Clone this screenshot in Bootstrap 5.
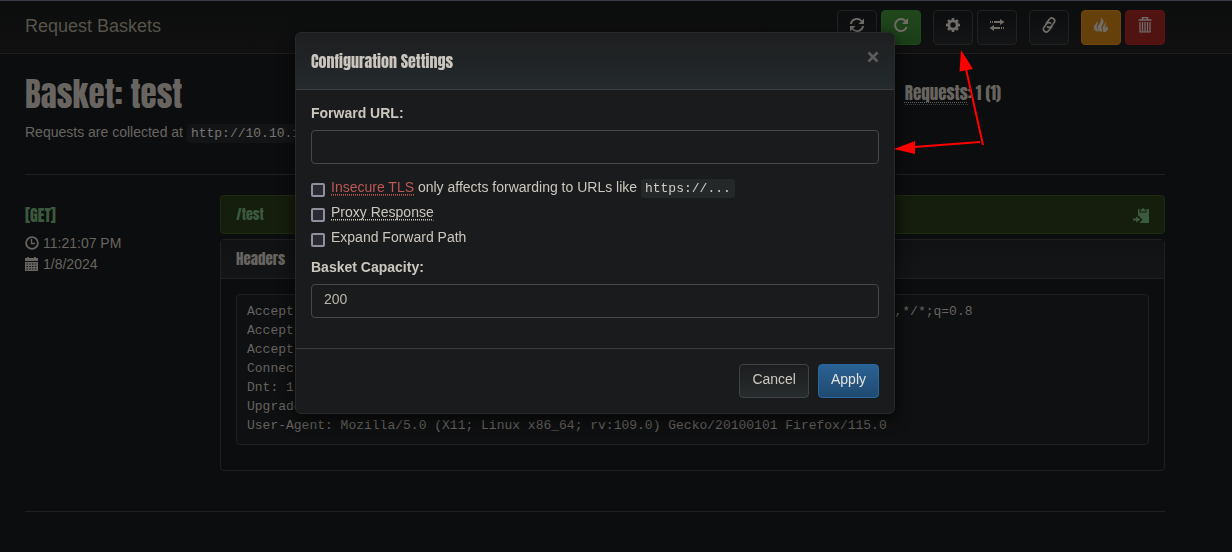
<!DOCTYPE html>
<html lang="en" data-bs-theme="dark">
<head>
<meta charset="utf-8">
<meta name="viewport" content="width=device-width, initial-scale=1">
<title>Request Baskets</title>
<link href="https://cdn.jsdelivr.net/npm/bootstrap@5.3.0/dist/css/bootstrap.min.css" rel="stylesheet">
<style>
  body { background: #0c0d0e; color: #686561; font: 14px/20px "Liberation Sans", Arial, sans-serif; overflow: hidden; }
  h1, h2, h4, h5, .request-path { font-family: Anton, Impact, "Roboto Condensed", Roboto, sans-serif; font-weight: 400; margin: 0; }
  h1, h2, h4, h5 { color: inherit; }
  .page-x { padding-left: 25px; padding-right: 67px; }
  .top-bar { border-top: 1px solid #3b3d46; border-bottom: 1px solid #1c1d1f; background: linear-gradient(#0c0d0d, #0f100f); height: 54px; padding-top: 0; padding-bottom: 0; }
  .navbar-brand, .navbar-brand:hover { font-size: 18px; line-height: 20px; color: #57544b; margin: 0; padding: 0 0 2px; }
  .tool { width: 40px; height: 35px; padding: 0 0 4px; display: flex; align-items: center; justify-content: center; border: 1px solid #1f2122; border-radius: 4px; background: linear-gradient(#0c0d0e, #131516); color: #706c68; }
  .tool svg, .paste svg { width: 16px; height: 16px; flex: none; }
  .tool-green { background: linear-gradient(#23471c, #1a3f19); border-color: #1d4a1b; }
  .tool-amber { background: #65400a; border-color: #70460a; }
  .tool-red { background: #511312; border-color: #5a1413; }
  .tools { gap: 12px; }
  .page-title { font-size: 33px; line-height: 40px; }
  .page-intro { padding-top: 20px; padding-bottom: 31px; }
  .count { font-size: 17px; line-height: 20px; padding-top: 8px; margin-right: 164px; }
  code { font: 13px/18px "Liberation Mono", monospace; color: #777573; background: #131415; border-radius: 3px; padding: 2px 4px; }
  abbr[title] { text-decoration: underline dotted; text-underline-offset: 2px; text-decoration-thickness: 1px; border-bottom: 1px dotted #45423f; cursor: help; }
  .count abbr { display: inline-block; line-height: 22px; }
  .rule { border: 0; border-top: 1px solid #1e2021; opacity: 1; margin: 0; }
  .request { padding-top: 20px; padding-bottom: 40px; }
  .meta { width: 195px; flex: none; padding-top: 10px; }
  .meta h4 { font-size: 16px; line-height: 20px; color: #3b5a3d; margin-bottom: 8px; }
  .meta svg { width: 14px; height: 14px; margin-right: 4px; margin-bottom: 2px; }
  .meta div { line-height: 21px; height: 21px; }
  .request-path { background: #151d0d; border: 1px solid #1d2c10; border-radius: 4px; padding: 0 15px; height: 39px; color: #3b5a3d; font-size: 14px; margin-bottom: 5px; }
  .paste { background: none; border: 0; padding: 0; color: #3b5a3d; display: flex; }
  .box { border: 1px solid #1e2021; border-radius: 4px; }
  .box-head { background: linear-gradient(#101112, #141517); border-bottom: 1px solid #1e2021; padding: 9px 15px; }
  .box-head h5 { font-size: 15px; line-height: 20px; }
  .box-content { padding: 15px 15px 25px; }
  pre { font: 13px/19px "Liberation Mono", monospace; color: #666360; background: #0f1011; border: 1px solid #1e2021; border-radius: 4px; padding: 7px 10px 9px; margin: 0; }

  .modal { padding-right: 42px; color: #ccc7be; }
  .modal-dialog { max-width: 600px; margin-top: 32px; margin-bottom: 0; }
  .modal-content { background: #1a1b1c; border: 1px solid #28292a; border-radius: 6px; box-shadow: 0 5px 15px #000000aa; color: inherit; }
  .modal-header { background: linear-gradient(#1d1e1f, #242a2d); border-bottom: 1px solid #3b3e40; padding: 0 15px; height: 57px; border-radius: 5px 5px 0 0; }
  .modal-header h2 { font-size: 16px; line-height: 20px; color: #cac5bd; }
  .close-x { background: none; border: 0; padding: 0 0 8px; color: #5c5c5c; display: flex; }
  .modal-body { padding: 13px 15px 30px; }
  .modal-body .head-label { font-weight: 700; line-height: 20px; margin-bottom: 7px; display: block; }
  .modal-body .form-control { height: 34px; background: #1a1b1c; border: 1px solid #454748; border-radius: 4px; padding: 0 12px 4px; font-size: 14px; color: #bab5ab; }
  .checks { padding: 13px 0 10px; gap: 5px; }
  .checks label { line-height: 20px; }
  .check-row { height: 20px; gap: 6px; }
  .checks .form-check-input { width: 14px; height: 14px; margin: 6px 0 0; border: 2px solid #8f8f9d; border-radius: 2px; background-color: #2b2a33; flex: none; }
  .modal code { color: #cfcdc9; background: #242829; }
  .modal abbr { border-bottom-color: #77736d; }
  .risky { color: #bc5856; }
  .risky abbr { border-bottom-color: #7a403e; }
  .modal-footer { border-top: 1px solid #3b3e40; padding: 15px; gap: 9px; }
  .modal-footer .btn { margin: 0; height: 34px; padding: 0 12px 4px; font-size: 14px; line-height: 20px; border-radius: 4px; border: 1px solid #404446; background: linear-gradient(#1c1d1e, #272c2e); color: #ccc7be; }
  .modal-footer .btn-apply { background: linear-gradient(#2a6295, #1f4a70); border-color: #2a679e; color: #e4e2de; }
  .pointer-arrows { position: absolute; left: 894px; top: 49px; width: 92px; height: 106px; z-index: 1100; pointer-events: none; }
</style>
</head>
<body>
<nav class="navbar top-bar page-x d-flex flex-nowrap justify-content-between">
  <a class="navbar-brand" href="#">Request Baskets</a>
  <div class="d-flex tools">
    <div class="d-flex gap-1">
      <button class="tool" type="button" aria-label="Refresh"><svg viewBox="0 0 16 16" fill="none" stroke="currentColor" stroke-width="1.800"><path d="M1.800 7A6.200 6.200 0 0 1 12.500 4M14.200 9A6.200 6.200 0 0 1 3.500 12"/><path d="M15 1.500V7H9.500zM1 14.500V9h5.500z" fill="currentColor" stroke="none"/></svg></button>
      <button class="tool tool-green" type="button" aria-label="Auto refresh"><svg viewBox="0 0 16 16" fill="none" stroke="currentColor" stroke-width="2"><path d="M12.500 4A6 6 0 1 0 13.700 10"/><path d="M15 1v6H9z" fill="currentColor" stroke="none"/></svg></button>
    </div>
    <div class="d-flex gap-1">
      <button class="tool" type="button" aria-label="Settings"><svg viewBox="0 0 16 16"><g fill="currentColor"><path fill-rule="evenodd" d="M8 2.700a5.300 5.300 0 1 0 0 10.600A5.300 5.300 0 0 0 8 2.700m0 2.600a2.700 2.700 0 1 1 0 5.400 2.700 2.700 0 0 1 0-5.400"/><path d="M6.800 1h2.400l.5 2.500H6.300zM6.800 15h2.400l.5-2.500H6.300zM1 6.800v2.400l2.500.5V6.300zM15 6.800v2.400l-2.500.5V6.300z"/><path d="M6.800 1h2.400l.5 2.500H6.300zM6.800 15h2.400l.5-2.500H6.300zM1 6.800v2.400l2.500.5V6.300zM15 6.800v2.400l-2.500.5V6.300z" transform="rotate(45 8 8)"/></g></svg></button>
      <button class="tool" type="button" aria-label="Responses"><svg viewBox="0 0 16 16" fill="currentColor"><path d="M1 4h1v2H1zM3 4h1v2H3zM5 4h6V2l4.500 3L11 8V6H5zM15 10h-1v2h1zM13 10h-1v2h1zM11 10H5V8L.5 11 5 14v-2h6z"/></svg></button>
    </div>
    <button class="tool" type="button" aria-label="Share link"><svg viewBox="0 0 16 16" fill="none" stroke="currentColor" stroke-width="1.700"><g transform="rotate(-52 8 8)"><path d="M9 11.200H3.200a2.900 2.900 0 0 1 0-5.800h4.300a2.900 2.900 0 0 1 2.800 3.400"/><path d="M7 4.800h5.800a2.900 2.900 0 0 1 0 5.800H8.500a2.900 2.900 0 0 1-2.800-3.400"/></g></svg></button>
    <div class="d-flex gap-1">
      <button class="tool tool-amber" type="button" aria-label="Delete requests"><svg viewBox="0 0 16 16" fill="currentColor"><path d="M7.500.5C11.500 3 11 5.500 9.500 7.700 8.400 9.300 8 10.500 8.800 12c.4.900.5 1.700.2 2.800C5.800 14.500 4.300 13 4.500 10.500 4.900 7.500 9.500 5 7.500.5M12 4.500c1.200 1.500 1 3 .4 4.200-.5 1-.4 1.800.1 2.300.7-.4 1-1.300.9-2.500 1.600 1.500 1.900 3.200 1 4.800-.8 1.300-2 1.800-4.200 2C10.700 13.500 9.200 12.500 9.600 10.500 10.100 8.500 12.600 7.500 12 4.500M4 3.500C5 5.500 4.800 6.500 4 8.200c-.7 2-.4 4 2 6.600C2.500 14.500 1 13 .8 10.800.7 8 4 7 4 3.500"/></svg></button>
      <button class="tool tool-red" type="button" aria-label="Delete basket"><svg viewBox="0 0 16 16"><g fill="none" stroke="currentColor"><path d="M5.500 2.500v-2h5v2M1.500 3h13" stroke-width="1.500"/><path d="M3 5v9.800h10V5M5.500 5v9M8 5v9M10.500 5v9" stroke-width="1.300"/></g></svg></button>
    </div>
  </div>
</nav>

<main class="page-x">
  <div class="page-intro d-flex justify-content-between">
    <div>
      <h1 class="page-title">Basket: test</h1>
      <p class="mt-2 mb-0 text-nowrap">Requests are collected at <code>http://10.10.11.224:55555/test</code></p>
    </div>
    <h4 class="count text-nowrap"><abbr title="Current (total)">Requests</abbr>: 1 (1)</h4>
  </div>
  <hr class="rule">
  <section class="request d-flex">
    <div class="meta">
      <h4>[GET]</h4>
      <div class="d-flex align-items-center"><svg viewBox="0 0 14 14" fill="none" stroke="currentColor"><circle cx="7" cy="7" r="5.900" stroke-width="1.800"/><path d="M6.500 3v4.500H10" stroke-width="1.300"/></svg>11:21:07 PM</div>
      <div class="d-flex align-items-center"><svg viewBox="0 0 14 14" fill="currentColor"><path fill-rule="evenodd" d="M0 1h2V0h2v1h5V0h2v1h2v3H0zM0 5h13v9H0zM1.500 6.500v1H3v-1zM4.300 6.500v1h1.500v-1zM7 6.500v1h1.500v-1zM9.800 6.500v1h1.500v-1zM1.500 9v1H3V9zM4.300 9v1h1.500V9zM7 9v1h1.500V9zM9.800 9v1h1.500V9zM1.500 11.500v1H3v-1zM4.300 11.500v1h1.500v-1zM7 11.500v1h1.500v-1zM9.800 11.500v1h1.500v-1z"/></svg>1/8/2024</div>
    </div>
    <div class="flex-grow-1">
      <div class="request-path d-flex align-items-center justify-content-between"><span>/test</span>
        <button class="paste" type="button" aria-label="Copy request"><svg viewBox="0 0 16 16" fill="currentColor"><path d="M5 2h1.500v3.500h7V2H16v14H6.500l3-3.500-4.500-4z"/><path d="M7.500 4.500v-2h1.300a1.300 1.300 0 0 1 2.600 0h1.300v2zM0 11.500h3v-2L7.500 12.500 3 15.500v-2H0z"/></svg></button>
      </div>
      <div class="box">
        <div class="box-head"><h5>Headers</h5></div>
        <div class="box-content"><pre>Accept: text/html,application/xhtml+xml,application/xml;q=0.9,image/avif,image/webp,*/*;q=0.8
Accept-Encoding: gzip, deflate
Accept-Language: en-US,en;q=0.5
Connection: close
Dnt: 1
Upgrade-Insecure-Requests: 1
User-Agent: Mozilla/5.0 (X11; Linux x86_64; rv:109.0) Gecko/20100101 Firefox/115.0</pre></div>
      </div>
    </div>
  </section>
  <hr class="rule">
</main>

<div class="modal d-block" role="dialog" aria-labelledby="config-title">
  <div class="modal-dialog">
    <form class="modal-content">
      <div class="modal-header d-flex justify-content-between">
        <h2 id="config-title">Configuration Settings</h2>
        <button class="close-x" type="button" aria-label="Close"><svg width="12" height="12" viewBox="0 0 12 12" stroke="currentColor" stroke-width="2.500"><path d="M1.500 1.500l9 9M10.500 1.500l-9 9"/></svg></button>
      </div>
      <div class="modal-body">
        <label class="head-label" for="forward">Forward URL:</label>
        <input class="form-control" id="forward" type="text">
        <div class="checks d-flex flex-column">
          <div class="check-row d-flex"><input class="form-check-input" type="checkbox" id="tls"><label for="tls"><span class="risky"><abbr title="Skip certificate checks">Insecure TLS</abbr></span> only affects forwarding to URLs like <code>https://...</code></label></div>
          <div class="check-row d-flex"><input class="form-check-input" type="checkbox" id="proxy"><label for="proxy"><abbr title="Return the forwarded response">Proxy Response</abbr></label></div>
          <div class="check-row d-flex"><input class="form-check-input" type="checkbox" id="expand"><label for="expand">Expand Forward Path</label></div>
        </div>
        <label class="head-label" for="capacity">Basket Capacity:</label>
        <input class="form-control" id="capacity" type="text" value="200">
      </div>
      <div class="modal-footer">
        <button class="btn" type="button">Cancel</button>
        <button class="btn btn-apply" type="submit">Apply</button>
      </div>
    </form>
  </div>
</div>

<svg class="pointer-arrows" viewBox="0 0 92 106" fill="#f00" stroke="#f00" aria-hidden="true">
  <path d="M89 96L72 20M86 93L20 98" stroke-width="2" fill="none"/>
  <path d="M67 1L65.500 22.500L79 20zM0 100L21 92V105z" stroke="none"/>
</svg>
<script src="https://cdn.jsdelivr.net/npm/bootstrap@5.3.0/dist/js/bootstrap.bundle.min.js"></script>
</body>
</html>
